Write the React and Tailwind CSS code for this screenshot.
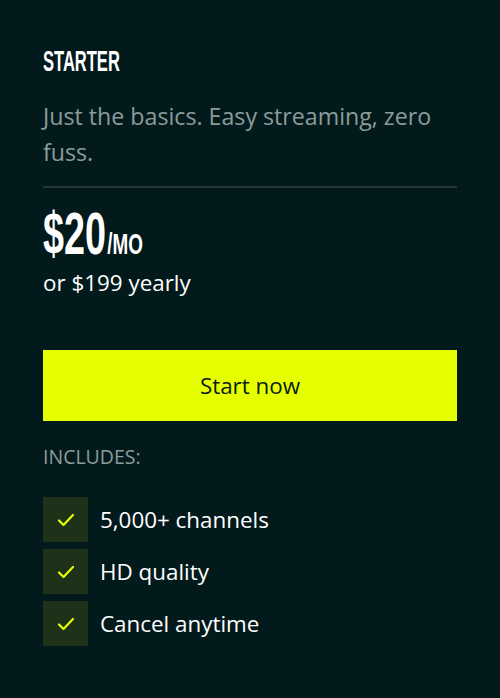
import React from "react";

const Check = () => (
  <svg width="18" height="14" viewBox="0 0 18 14" fill="none">
    <path d="M2 7.5 L6.5 12 L16 2" stroke="#e6ff00" strokeWidth="2.2" strokeLinecap="round" strokeLinejoin="round" />
  </svg>
);

export default function App() {
  const items = ["5,000+ channels", "HD quality", "Cancel anytime"];
  return (
    <div className="w-[500px] h-[698px] bg-[#031a1c] px-[43px] pt-[46px] font-['Open_Sans',sans-serif] overflow-hidden">
      <div className="h-[30px] flex items-center">
        <span className="origin-left scale-x-[0.57] inline-block text-[29px] leading-none font-bold text-white font-['Liberation_Sans_Narrow','Liberation_Sans',sans-serif]">
          STARTER
        </span>
      </div>
      <p className="mt-[22px] pr-[20px] text-[23.2px] leading-[36px] text-[#8b9c9a]">
        Just the basics. Easy streaming, zero fuss.
      </p>
      <div className="mt-[16px] h-[2px] bg-[#243638]" />
      <div className="mt-[30px] h-[46px] flex items-end">
        <span className="origin-left scale-x-[0.64] inline-flex items-baseline text-white font-bold font-['Liberation_Sans_Narrow','Liberation_Sans',sans-serif] whitespace-nowrap">
          <span className="text-[59px] leading-none">$20</span>
          <span className="ml-[2px] text-[29.5px] leading-none">/MO</span>
        </span>
      </div>
      <p className="mt-[4px] text-[22.4px] leading-[30px] text-white">or $199 yearly</p>
      <button className="mt-[52px] w-full h-[71px] bg-[#e6ff00] text-[#0b1a12] text-[22.4px] flex items-center justify-center">
        Start now
      </button>
      <p className="mt-[22px] text-[19.5px] leading-[28px] text-[#8b9c9a]">INCLUDES:</p>
      <ul className="mt-[26px] flex flex-col gap-[7px]">
        {items.map((t) => (
          <li key={t} className="flex items-center gap-[12px]">
            <div className="w-[45px] h-[45px] bg-[#1e321a] flex items-center justify-center">
              <Check />
            </div>
            <span className="text-white text-[22.4px] leading-[30px]">{t}</span>
          </li>
        ))}
      </ul>
    </div>
  );
}
